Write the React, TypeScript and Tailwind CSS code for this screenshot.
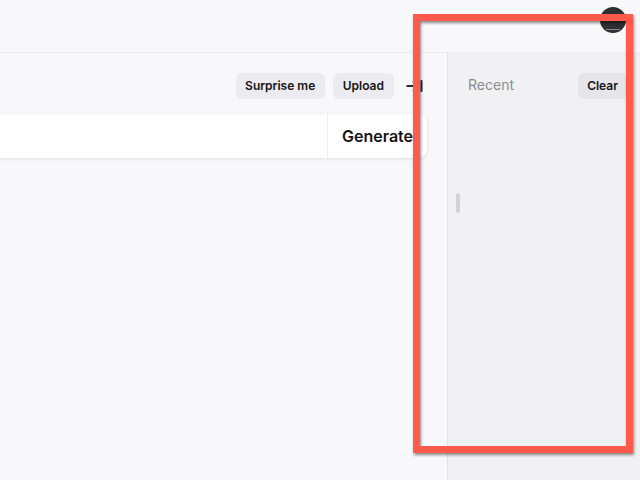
import React from "react";

function ArrowRightToLine() {
  return (
    <svg width="20" height="20" viewBox="0 0 24 24" fill="none" stroke="#2a2a2e" strokeWidth="2.4" strokeLinecap="butt" strokeLinejoin="round">
      <path d="M17 12H3" />
      <path d="m11 18 6-6-6-6" />
      <path d="M21 5v14" />
    </svg>
  );
}

export default function App() {
  return (
    <div className="relative w-[640px] h-[480px] overflow-hidden bg-[#f8f8fa] font-['Inter',sans-serif] text-[#141416]">
      <header className="h-[53px] border-b border-[#ececf0] flex justify-end items-start pt-[7px] pr-[14px]">
        <div className="w-[26px] h-[26px] rounded-full bg-[#2f2f31] flex items-end justify-center pb-[3px]">
          <div className="w-[14px] h-[1px] bg-[#8a8a8c]" />
        </div>
      </header>
      <div className="flex h-[427px]">
        <main className="w-[447px] pr-[20px] flex flex-col">
          <div className="mt-[20px] h-[26px] flex justify-end items-center pr-[3px]">
            <button className="h-[26px] px-[9.5px] rounded-md bg-[#ebebf0] text-[12px] font-semibold leading-none">Surprise me</button>
            <button className="ml-[8px] h-[26px] px-[10px] rounded-md bg-[#ebebf0] text-[12px] font-semibold leading-none">Upload</button>
            <span className="ml-[10px] flex items-center"><ArrowRightToLine /></span>
          </div>
          <div className="mt-[15px] -ml-[20px] h-[44px] bg-white rounded-r-lg shadow-[0_1px_3px_rgba(60,60,110,0.14)] flex">
            <div className="flex-1" />
            <button className="w-[100px] h-full border-l border-[#eeeef2] pl-[14px] text-left text-[16px] font-semibold">Generate</button>
          </div>
        </main>
        <aside className="relative flex-1 border-l border-[#e4e4e8] bg-[#f1f1f3] pl-[20px] pr-[13px]">
          <div className="mt-[20px] h-[26px] flex items-center justify-between">
            <span className="text-[14px] leading-none text-[#8b8b90] -mt-[2px]">Recent</span>
            <button className="h-[26px] px-[9px] rounded-md bg-[#e6e6ea] text-[12px] font-semibold leading-none">Clear</button>
          </div>
          <div className="absolute left-[8px] top-[140px] w-[4px] h-[20px] rounded-full bg-[#d2d2d6]" />
        </aside>
      </div>
      <div className="absolute left-[413px] top-[14px] w-[220px] h-[439px] border-[7px] border-[#ff5a4c] drop-shadow-[1px_2px_1.5px_rgba(0,0,0,0.45)]" />
    </div>
  );
}
